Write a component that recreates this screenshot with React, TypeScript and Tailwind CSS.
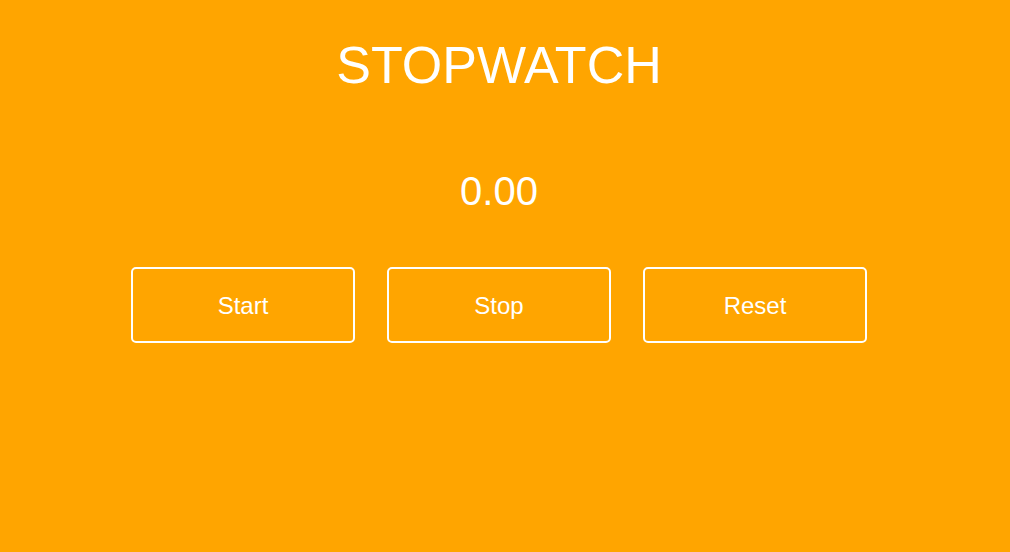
export default function App() {
  const buttons = ["Start", "Stop", "Reset"];

  return (
    <div className="min-h-screen w-full bg-[#ffa500] font-['Liberation_Sans',Arial,sans-serif] text-white">
      <div className="w-[998px] flex flex-col items-center">
        <h1 className="mt-[36px] text-[52px] leading-[58px]">STOPWATCH</h1>
        <div className="mt-[75px] text-[40px] leading-[45px]">0.00</div>
        <div className="mt-[53px] flex gap-8">
          {buttons.map((label) => (
            <button
              key={label}
              className="w-[224px] h-[76px] rounded-[5px] border-2 border-white pt-px text-[24px] text-white"
            >
              {label}
            </button>
          ))}
        </div>
      </div>
    </div>
  );
}
